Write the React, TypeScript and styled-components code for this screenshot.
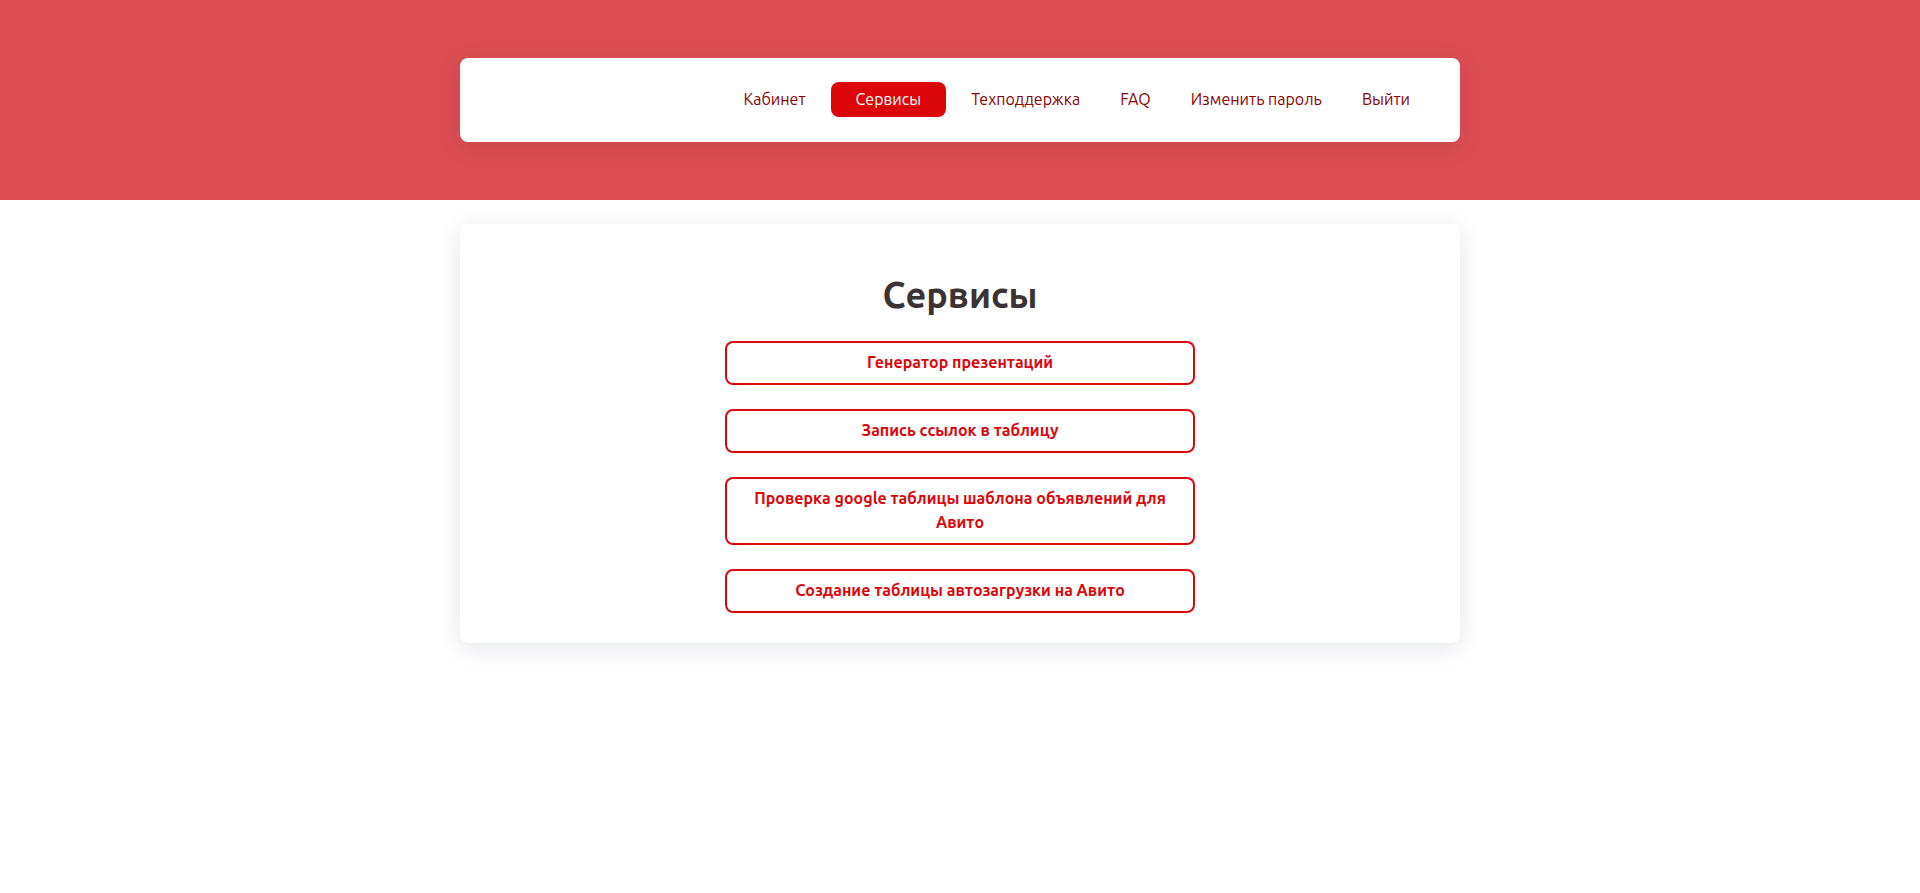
import React from "react";
import styled, { createGlobalStyle } from "styled-components";

const GlobalStyle = createGlobalStyle`
  *, *::before, *::after {
    box-sizing: border-box;
  }
  body {
    margin: 0;
    background: #ffffff;
    color: #3a3233;
    font-family: Ubuntu, "Noto Sans", sans-serif;
    font-size: 16px;
    font-weight: 400;
    line-height: 24px;
  }
`;

const Header = styled.header`
  padding: 58px 16px;
  background: #dd4e51;
`;

const Card = styled.div`
  max-width: 1000px;
  margin: 0 auto;
  border-radius: 8px;
  background: #ffffff;
  box-shadow: 0 5px 25px rgba(8, 21, 66, 0.1);
`;

const NavCard = styled(Card)`
  padding: 24px 30px 25px;
`;

const NavList = styled.ul`
  display: flex;
  flex-wrap: wrap;
  justify-content: flex-end;
  align-items: center;
  margin: 0;
  padding: 0;
  list-style: none;
`;

const NavLink = styled.a<{ $active?: boolean }>`
  display: block;
  margin: 0 ${(p) => (p.$active ? 5 : 0)}px;
  padding: 5px ${(p) => (p.$active ? 25 : 20)}px 6px;
  border-radius: 8px;
  background: ${(p) => (p.$active ? "#db070b" : "transparent")};
  color: ${(p) => (p.$active ? "#fefefe" : "#8b0000")};
  text-decoration: none;
`;

const Main = styled.main`
  padding: 24px 16px;
`;

const ServicesCard = styled(Card)`
  padding: 47px 16px 30px;
`;

const Title = styled.h1`
  margin: 0 0 22px;
  font-size: 36px;
  font-weight: 600;
  line-height: 48px;
  text-align: center;
`;

const ServiceList = styled.nav`
  display: flex;
  flex-direction: column;
  gap: 24px;
  max-width: 470px;
  margin: 0 auto;
`;

const ServiceLink = styled.a`
  padding: 7px 25px 9px;
  border: 2px solid #db070b;
  border-radius: 8px;
  color: #db070b;
  font-weight: 600;
  text-align: center;
  text-decoration: none;
`;

const navItems = [
  { label: "Кабинет" },
  { label: "Сервисы", active: true },
  { label: "Техподдержка" },
  { label: "FAQ" },
  { label: "Изменить пароль" },
  { label: "Выйти" },
];

const services = [
  "Генератор презентаций",
  "Запись ссылок в таблицу",
  "Проверка google таблицы шаблона объявлений для Авито",
  "Создание таблицы автозагрузки на Авито",
];

export default function App() {
  return (
    <>
      <GlobalStyle />
      <Header>
        <NavCard as="nav">
          <NavList>
            {navItems.map(({ label, active }) => (
              <li key={label}>
                <NavLink href="#" $active={active} aria-current={active ? "page" : undefined}>
                  {label}
                </NavLink>
              </li>
            ))}
          </NavList>
        </NavCard>
      </Header>
      <Main>
        <ServicesCard>
          <Title>Сервисы</Title>
          <ServiceList>
            {services.map((name) => (
              <ServiceLink key={name} href="#">
                {name}
              </ServiceLink>
            ))}
          </ServiceList>
        </ServicesCard>
      </Main>
    </>
  );
}
